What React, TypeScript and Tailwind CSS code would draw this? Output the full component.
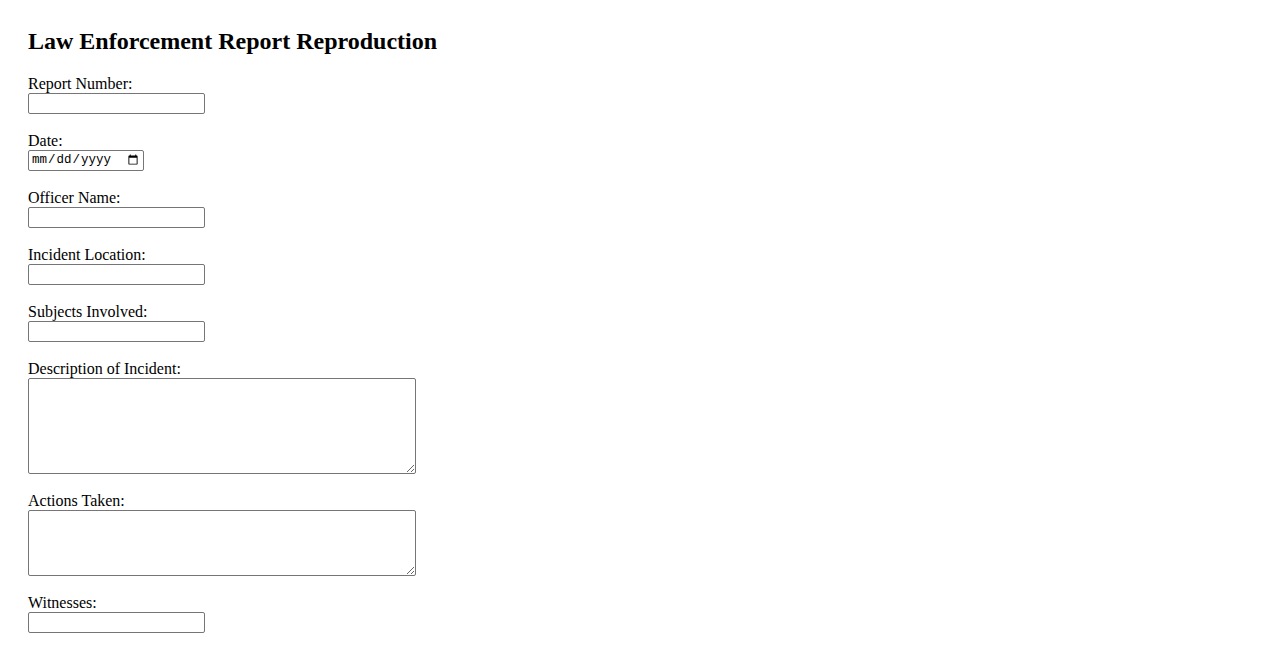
const fields: { label: string; kind: "text" | "date" | "area"; h?: string }[] = [
  { label: "Report Number:", kind: "text" },
  { label: "Date:", kind: "date" },
  { label: "Officer Name:", kind: "text" },
  { label: "Incident Location:", kind: "text" },
  { label: "Subjects Involved:", kind: "text" },
  { label: "Description of Incident:", kind: "area", h: "h-[96px]" },
  { label: "Actions Taken:", kind: "area", h: "h-[66px]" },
  { label: "Witnesses:", kind: "text" },
];

const App = () => {
  return (
    <div className="min-h-screen bg-white px-7 pt-7 text-black font-['Liberation_Serif','Times_New_Roman',serif]">
      {/* TITLE */}
      <h2 className="text-[24px] font-bold leading-[27px] mb-[19px]">
        Law Enforcement Report Reproduction
      </h2>

      {/* FORM */}
      <form>
        {fields.map((f) => (
          <div key={f.label} className="mb-[17px]">
            <label className="block text-[16px] leading-[20px] h-[19px]">{f.label}</label>

            {f.kind === "text" && (
              <input
                type="text"
                className="block w-[177px] h-[21px] border border-[#767676] rounded-[2px] px-[2px] text-[13px] font-['Liberation_Sans',Arial,sans-serif] bg-white"
              />
            )}

            {f.kind === "date" && (
              <input
                type="date"
                className="block w-[116px] h-[21px] border border-[#767676] rounded-[2px] px-[2px] text-[12.5px] font-['Liberation_Mono',monospace] bg-white"
              />
            )}

            {f.kind === "area" && (
              <textarea
                className={`block w-[388px] ${f.h} border border-[#767676] rounded-[2px] p-[2px] text-[13px] font-['Liberation_Mono',monospace] bg-white resize`}
              />
            )}
          </div>
        ))}
      </form>
    </div>
  );
};

export default App;
